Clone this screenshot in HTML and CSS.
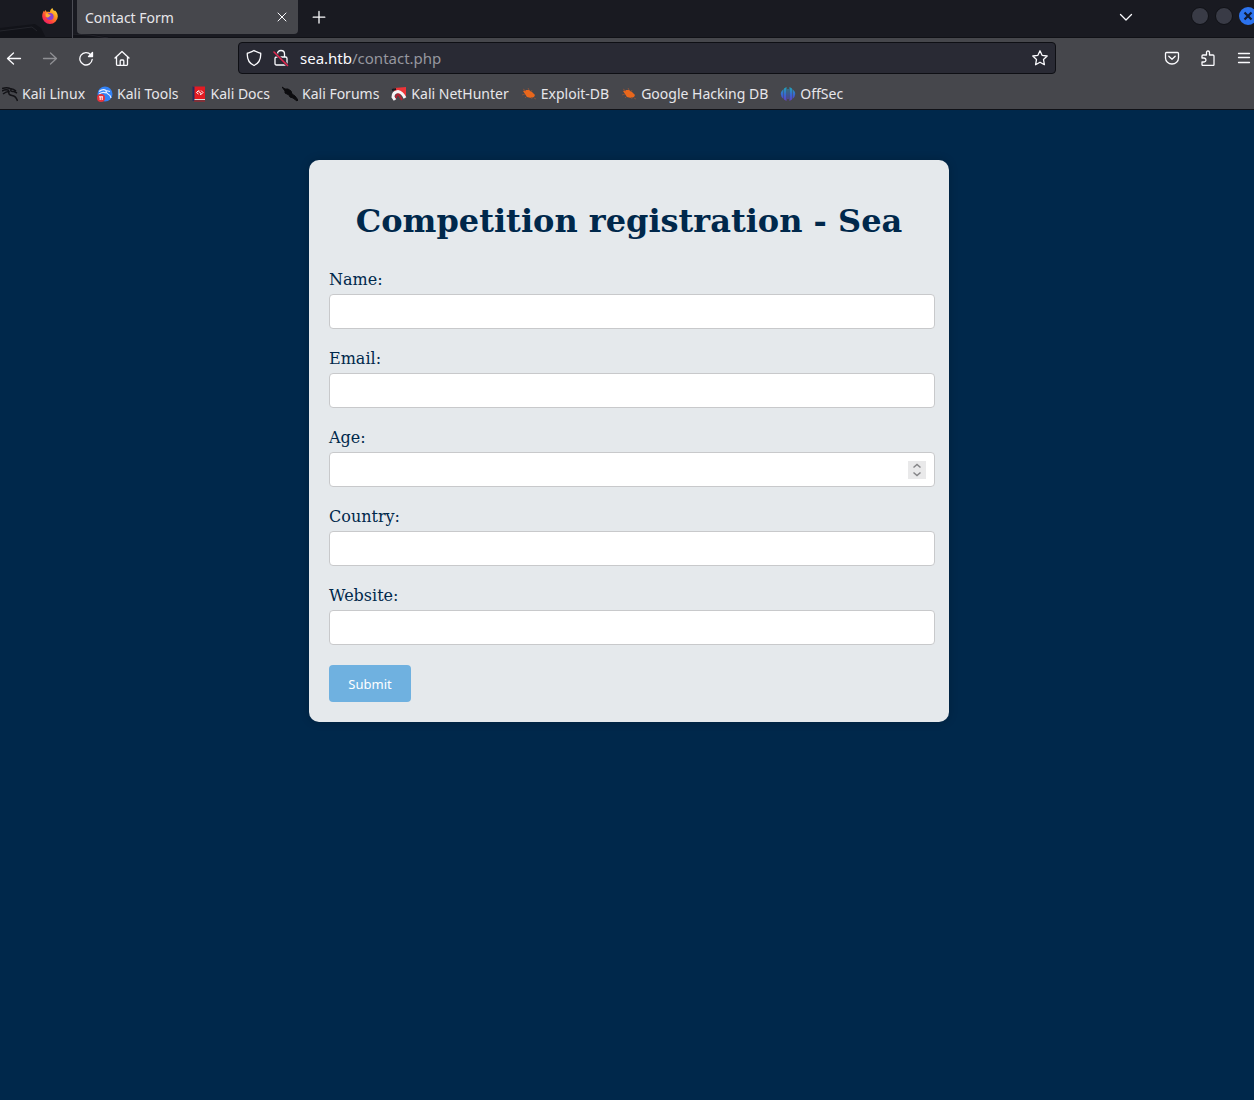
FILE: index.html
```html
<!DOCTYPE html>
<html lang="en">
<head>
    <meta charset="UTF-8">
    <meta name="viewport" content="width=device-width, initial-scale=1.0">
    <title>Contact Form</title>
    <link rel="stylesheet" href="styles.css">
</head>
<body>
    <header class="browser">
        <div class="tabbar">
            <svg class="deco" width="130" height="38" viewBox="0 0 130 38" aria-hidden="true">
                <path d="M0 28L35 24 41 28 46 38H0ZM73 33L91 34 115 38H73Z" fill="#121319"/>
                <path d="M0 31L32 27 37 31M73 34L90 35 108 38" fill="none" stroke="#24252c"/>
            </svg>
            <button class="firefox" aria-label="Firefox View">
                <svg width="16" height="16" viewBox="0 0 16 16">
                    <defs>
                        <linearGradient id="fox" x1="1" y1="0" x2="0.2" y2="1">
                            <stop offset="0" stop-color="#fff14a"/>
                            <stop offset="0.4" stop-color="#ff9a1f"/>
                            <stop offset="0.75" stop-color="#ff3d3f"/>
                            <stop offset="1" stop-color="#e7196f"/>
                        </linearGradient>
                    </defs>
                    <path d="M10.5 0c.2 1.4 1 2.2 2 3.1.2-.3.2-.6.2-.9 2 1.7 3.1 3.9 3.1 6.200A7.800 7.800 0 0 1 8 16 7.800 7.800 0 0 1 .2 8.400C.2 6.300.8 4.300 2.100 2.600c0 .6.100 1 .3 1.400.4-.9.900-1.500 1.600-2-.1.800.1 1.400.6 1.800 1.200-.3 2.400-.1 3.400.3C8 2.400 9 .9 10.500 0Z" fill="url(#fox)"/>
                    <circle cx="8" cy="8.500" r="3.600" fill="#8a3fd1"/>
                    <path d="M3.600 5.600c1.600-.8 2.800.2 3.300 1 .7.200 1.700.1 1.700.7 0 .8-1.400 1-1.800 1.600-1.200 1-2.600.5-3.200-.3Z" fill="#ffac32"/>
                </svg>
            </button>
            <div class="tab">
                <span class="tab-title">Contact Form</span>
                <button class="tab-close" aria-label="Close tab">
                    <svg class="icon" width="16" height="16" viewBox="0 0 16 16"><path d="M4 4L12 12M12 4L4 12"/></svg>
                </button>
            </div>
            <button class="new-tab" aria-label="New tab">
                <svg class="icon" width="16" height="16" viewBox="0 0 16 16"><path d="M8 2.500V14M2.200 8.200H13.800"/></svg>
            </button>
            <button class="all-tabs" aria-label="List all tabs">
                <svg class="icon" width="16" height="16" viewBox="0 0 16 16"><path d="M2.500 5.500L8 11L13.500 5.500"/></svg>
            </button>
            <div class="window-buttons">
                <button class="win" aria-label="Minimize"></button>
                <button class="win" aria-label="Maximize"></button>
                <button class="win win-close" aria-label="Close window">
                    <svg width="18" height="18" viewBox="0 0 18 18"><path d="M5.500 5.500L12.500 12.500M12.500 5.500L5.500 12.500" stroke="#101a33" stroke-width="2.200"/></svg>
                </button>
            </div>
        </div>

        <div class="toolbar">
            <nav class="tools" aria-label="Navigation">
                <button aria-label="Back"><svg class="icon" width="16" height="16" viewBox="0 0 16 16"><path d="M14.500 8.500H1.500M7.500 3L1.500 8.500L7.500 14"/></svg></button>
                <button class="dim" aria-label="Forward" disabled><svg class="icon" width="16" height="16" viewBox="0 0 16 16"><path d="M1.500 8.500H14.500M8.500 3L14.500 8.500L8.500 14"/></svg></button>
                <button aria-label="Reload"><svg class="icon" width="16" height="16" viewBox="0 0 16 16"><path d="M12.800 4.800A6.200 6.200 0 1 0 14.200 9.500"/><path d="M14.500 2.500V6.500H10.500Z" fill="#fbfbfe"/></svg></button>
                <button aria-label="Home"><svg class="icon" width="16" height="16" viewBox="0 0 16 16"><path d="M1 8L8 1.500L15 8M2.500 7V14.500Q2.500 15.300 3.300 15.300H12.700Q13.500 15.300 13.500 14.500V7M6.200 15V10.900Q6.200 10 7 10H9Q9.800 10 9.800 10.900V15"/></svg></button>
            </nav>
            <div class="urlbar">
                <svg class="icon" width="16" height="18" viewBox="0 0 16 18"><path d="M8 1.500C10 3 12.500 3.500 14.700 4.200C15 9.500 12.500 14.500 8 16.500C3.500 14.500 1 9.500 1.300 4.200C3.500 3.500 6 3 8 1.500Z"/></svg>
                <svg class="icon" width="16" height="18" viewBox="0 0 16 18"><path d="M4.500 8V5Q4.500 1.500 8 1.500T11.500 5V8M3.500 8H12.500Q14 8 14 9.500V14.500Q14 16 12.500 16H3.500Q2 16 2 14.500V9.500Q2 8 3.500 8Z"/><path d="M1 3L14.500 16.500" stroke="#292a34" stroke-width="3"/><path d="M1 3L14.500 16.500" stroke="#e22850" stroke-width="1.600"/></svg>
                <a class="url" href="#"><span class="host">sea.htb</span>/contact.php</a>
                <button aria-label="Bookmark this page"><svg class="icon" width="16" height="16" viewBox="0 0 16 16"><path d="M8 .8L10.100 5.300L15.200 6L11.500 9.500L12.400 14.700L8 12.200L3.600 14.700L4.500 9.500L.8 6L5.900 5.300Z"/></svg></button>
            </div>
            <div class="tools">
                <button aria-label="Save to Pocket"><svg class="icon" width="16" height="16" viewBox="0 0 16 16"><path d="M2.500 2.500H13.500Q14.500 2.500 14.500 3.500V8A6.500 6 0 0 1 1.500 8V3.500Q1.500 2.500 2.500 2.500ZM4.800 6.300L8 9.300L11.200 6.300"/></svg></button>
                <button aria-label="Extensions"><svg class="icon" width="16" height="16" viewBox="0 0 16 16"><path d="M2 8V6Q2 5 3 5H6.500V2.500Q6.500 1 8 1T9.500 2.500V5H13Q14 5 14 6V14.500Q14 15.500 13 15.500H3Q2 15.500 2 14.500V12H4Q6 11.800 6 10T4 8Z"/></svg></button>
                <button aria-label="Application menu"><svg class="icon" width="16" height="16" viewBox="0 0 16 16"><path d="M2.500 3.500H13.500M2.500 7.500H13.500M2.500 12.500H13.500"/></svg></button>
            </div>
        </div>

        <nav class="bookmarks" aria-label="Bookmarks">
            <a href="#">
                <svg width="16" height="16" viewBox="0 0 16 16"><path d="M0 2.500Q5 1 8 2.500Q12 3 14 5M0 5Q4 3 7 4.500M1 8Q4 5.500 7 5.500Q6 9 10 9.500Q14 10 15.500 15M9 3.500Q8 6 12 5.500L15 7" fill="none" stroke="#121216" stroke-width="1.500"/></svg>
                Kali Linux
            </a>
            <a href="#">
                <svg width="16" height="16" viewBox="0 0 16 16"><circle cx="8" cy="8" r="7.500" fill="#3282f6"/><path d="M2 5.500Q6 2.500 9 4.500L13 5.500M9 5Q9 7 11 8Q13.500 9 14 12M2 8Q6 5.500 9 7" fill="none" stroke="#e8f1ff" stroke-width="1.200"/><circle cx="4" cy="12" r="4" fill="#e5343c"/><path d="M2 10.800H6M3.200 11V14M5.200 11V14" stroke="#fff"/></svg>
                Kali Tools
            </a>
            <a href="#">
                <svg width="16" height="16" viewBox="0 0 16 16"><path d="M2 .5H14V13H3L2 15Z" fill="#e31b23"/><path d="M1.500 .5H3.500V15H1.500Z" fill="#252c5d"/><path d="M3.500 13.500H14" stroke="#ddd"/><path d="M3 15H14" stroke="#b81c24"/><path d="M7.500 4.500L5.500 6.500L7.500 8M10 4.500L12 6.500L10 8.500M8 4.500Q7 6 9 6.500T9.500 9" fill="none" stroke="#fff"/></svg>
                Kali Docs
            </a>
            <a href="#">
                <svg width="16" height="16" viewBox="0 0 16 16"><path d="M0 1L3 3L6 3L9 5L10 8L13 10L16 14L15 15L11 12L8 11L7 9L3 7L3 5Z" fill="#0c0c0f" stroke="#0c0c0f"/></svg>
                Kali Forums
            </a>
            <a href="#">
                <svg width="16" height="16" viewBox="0 0 16 16"><path d="M3 2L15 1V11L11 9L3 6Z" fill="#ed3438"/><path d="M4 14L2 11Q2 6 7 5.500Q11 6 14 12" fill="none" stroke="#f6f2f4" stroke-width="3"/><path d="M5 12Q5 8 8 9L11 14" fill="none" stroke="#b32030" stroke-width="2"/><path d="M1 4L5 3" stroke="#191b20" stroke-width="2"/></svg>
                Kali NetHunter
            </a>
            <a href="#">
                <svg width="16" height="16" viewBox="0 0 16 16"><path d="M2 5L5 4L8 4L11 6L14 9L13 11L10 12L6 11L4 8Z" fill="#e9671c"/><path d="M2 3L5 5M7 2L8 4M11 4L10 6M1 9L4 8M4 12L6 10M11 13L10 11M13 12L15 13" stroke="#87513a"/></svg>
                Exploit-DB
            </a>
            <a href="#">
                <svg width="16" height="16" viewBox="0 0 16 16"><path d="M2 5L5 4L8 4L11 6L14 9L13 11L10 12L6 11L4 8Z" fill="#e9671c"/><path d="M2 3L5 5M7 2L8 4M11 4L10 6M1 9L4 8M4 12L6 10M11 13L10 11M13 12L15 13" stroke="#87513a"/></svg>
                Google Hacking DB
            </a>
            <a href="#">
                <svg width="16" height="16" viewBox="0 0 16 16">
                    <defs>
                        <linearGradient id="off" x1="0" y1="0" x2="0" y2="1">
                            <stop offset="0" stop-color="#1fa5b5"/>
                            <stop offset="0.6" stop-color="#3c62d2"/>
                            <stop offset="1" stop-color="#6340bd"/>
                        </linearGradient>
                    </defs>
                    <path d="M6.500 1V15L4 13.500V2.500ZM3.500 3V13Q-2 8 3.500 3ZM7.500 3H8.500V13H7.500ZM9.500 1L12 2.500V13.500L9.500 15ZM12.500 3Q18 8 12.500 13Z" fill="url(#off)"/>
                </svg>
                OffSec
            </a>
        </nav>
    </header>

    <main>
        <div class="container">
            <h1>Competition registration - Sea</h1>
            <form>
                <label for="name">Name:</label>
                <input type="text" id="name" name="name">

                <label for="email">Email:</label>
                <input type="email" id="email" name="email">

                <label for="age">Age:</label>
                <div class="number">
                    <input type="number" id="age" name="age">
                    <svg class="spinner" width="18" height="18" viewBox="0 0 18 18" aria-hidden="true"><path d="M5.500 6.500L9 3.500L12.500 6.500M5.500 11.500L9 14.500L12.500 11.500"/></svg>
                </div>

                <label for="country">Country:</label>
                <input type="text" id="country" name="country">

                <label for="website">Website:</label>
                <input type="text" id="website" name="website">

                <button type="submit" class="submit">Submit</button>
            </form>
        </div>
    </main>
</body>
</html>
```

FILE: styles.css
```css
* {
    box-sizing: border-box;
}

body {
    margin: 0;
    min-height: 100vh;
    background-color: #00284b;
    color: #00284b;
    font-family: "DejaVu Serif", serif;
    font-size: 16px;
}

button {
    padding: 0;
    border: none;
    background: none;
    font-family: inherit;
}

svg {
    display: block;
    flex: none;
}

.icon {
    fill: none;
    stroke: #fbfbfe;
    stroke-width: 1.3;
    stroke-linejoin: round;
    stroke-linecap: round;
}

/* browser window */
.browser {
    background-color: #46474c;
    border-bottom: 1px solid #101116;
    color: #e6e6ea;
    font-family: "Noto Sans", sans-serif;
    font-size: 14px;
    overflow: hidden;
}

.tabbar {
    position: relative;
    display: flex;
    height: 38px;
    padding-bottom: 4px;
    background-color: #191a21;
    box-shadow: inset 0 -1px #101116;
}

.deco {
    position: absolute;
    left: 0;
    top: 0;
}

.firefox {
    position: relative;
    display: flex;
    width: 73px;
    margin-bottom: -4px;
    padding: 8px 0 0 42px;
    border-right: 1px solid #4c4d55;
}

.tab {
    position: relative;
    display: flex;
    align-items: center;
    justify-content: space-between;
    width: 221px;
    margin-left: 4px;
    padding: 0 8px;
    background-color: #46474c;
    border-radius: 0 0 4px 4px;
}

.tab-close .icon {
    stroke-width: 1;
}

.new-tab {
    margin-left: 13px;
}

.all-tabs {
    margin-left: auto;
}

.window-buttons {
    display: flex;
    align-items: center;
    gap: 6px;
    height: 32px;
    margin-left: 57px;
    margin-right: -3px;
}

.win {
    width: 18px;
    height: 18px;
    border: 1px solid #101116;
    border-radius: 50%;
    background-color: #393b46;
}

.win-close {
    border: none;
    background-color: #2c73ee;
}

.toolbar {
    display: flex;
    align-items: center;
    gap: 106px;
    height: 40px;
    padding-left: 4px;
}

.tools {
    display: flex;
    gap: 16px;
}

.tools button {
    display: flex;
    justify-content: center;
    width: 20px;
}

.tools .dim {
    opacity: 0.4;
}

.urlbar {
    display: flex;
    flex: 1;
    align-items: center;
    gap: 11px;
    height: 32px;
    padding: 0 7px;
    background-color: #292a34;
    border: 1px solid #0e0f14;
    border-radius: 4px;
}

.url {
    flex: 1;
    color: #96979f;
    font-size: 15px;
    text-decoration: none;
}

.host {
    color: #fbfbfe;
}

.bookmarks {
    display: flex;
    align-items: center;
    gap: 12px;
    height: 31px;
    padding-left: 2px;
}

.bookmarks a {
    display: flex;
    align-items: center;
    gap: 4px;
    color: #e6e6ea;
    text-decoration: none;
    white-space: nowrap;
}

/* page */
main {
    padding: 50px 0 50px 4px;
}

.container {
    max-width: 640px;
    margin: 0 auto;
    padding: 20px;
    background-color: #e5e9ec;
    border-radius: 10px;
    box-shadow: 0 0 10px rgba(0, 0, 0, 0.2);
}

h1 {
    margin: 22px 0 30px;
    font-size: 32px;
    line-height: 38px;
    text-align: center;
}

label {
    display: block;
    margin-bottom: 5px;
    line-height: 19px;
}

input {
    display: block;
    width: calc(100% + 6px);
    height: 35px;
    margin-bottom: 20px;
    padding: 8px;
    background-color: #fff;
    border: 1px solid #c8c9cb;
    border-radius: 4px;
}

input[type="number"]::-webkit-inner-spin-button {
    appearance: none;
}

.number {
    position: relative;
}

.spinner {
    position: absolute;
    top: 9px;
    right: 3px;
    background-color: #e9e9ea;
    fill: none;
    stroke: #858588;
    stroke-width: 1.5;
}

.submit {
    display: block;
    width: 82px;
    height: 37px;
    background-color: #6fb1e0;
    border-radius: 4px;
    color: #fff;
    font-family: "Noto Sans", sans-serif;
    font-size: 13px;
}
```
